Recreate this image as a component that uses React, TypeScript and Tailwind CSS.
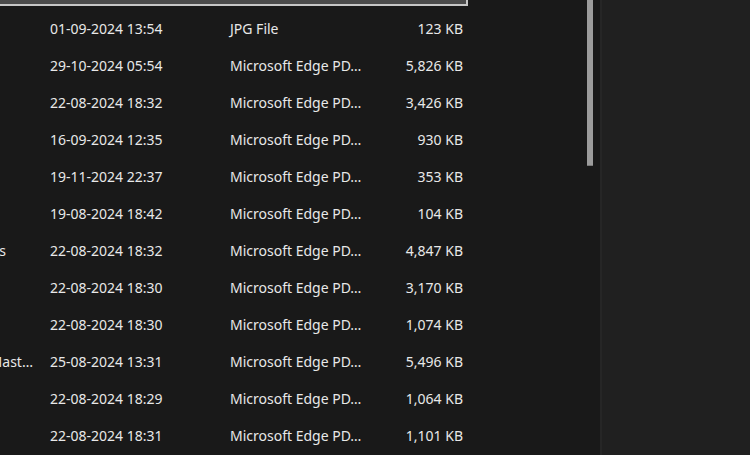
const rows = [
  { name: "", pad: "pr-[5px]", date: "01-09-2024 13:54", type: "JPG File", size: "123 KB" },
  { name: "", pad: "pr-[5px]", date: "29-10-2024 05:54", type: "Microsoft Edge PD…", size: "5,826 KB" },
  { name: "", pad: "pr-[5px]", date: "22-08-2024 18:32", type: "Microsoft Edge PD…", size: "3,426 KB" },
  { name: "", pad: "pr-[5px]", date: "16-09-2024 12:35", type: "Microsoft Edge PD…", size: "930 KB" },
  { name: "", pad: "pr-[5px]", date: "19-11-2024 22:37", type: "Microsoft Edge PD…", size: "353 KB" },
  { name: "", pad: "pr-[5px]", date: "19-08-2024 18:42", type: "Microsoft Edge PD…", size: "104 KB" },
  { name: "Lecture Notes", pad: "pr-[32px]", date: "22-08-2024 18:32", type: "Microsoft Edge PD…", size: "4,847 KB" },
  { name: "", pad: "pr-[5px]", date: "22-08-2024 18:30", type: "Microsoft Edge PD…", size: "3,170 KB" },
  { name: "", pad: "pr-[5px]", date: "22-08-2024 18:30", type: "Microsoft Edge PD…", size: "1,074 KB" },
  { name: "Digital Mast…", pad: "pr-[5px]", date: "25-08-2024 13:31", type: "Microsoft Edge PD…", size: "5,496 KB" },
  { name: "", pad: "pr-[5px]", date: "22-08-2024 18:29", type: "Microsoft Edge PD…", size: "1,064 KB" },
  { name: "", pad: "pr-[5px]", date: "22-08-2024 18:31", type: "Microsoft Edge PD…", size: "1,101 KB" },
];

export default function App() {
  return (
    <div
      className="flex h-[455px] w-[750px] overflow-hidden bg-[#191919] text-[14px] text-[#e8e8e8]"
      style={{ fontFamily: '"Noto Sans", "Open Sans", sans-serif' }}
    >
      {/* file list */}
      <div className="w-[580px] overflow-hidden">
        <div className="h-[6px] w-[468px] border-r-2 border-b-2 border-[#c6c6c6] bg-[#4b4b4b]" />
        {rows.map((r, i) => (
          <div key={i} className="flex h-[37px] items-center pt-[7px] whitespace-nowrap">
            <div className={`flex w-[38px] justify-end overflow-hidden ${r.pad}`}>
              <span>{r.name}</span>
            </div>
            <div className="ml-[12px] w-[180px]">{r.date}</div>
            <div className="w-[140px]">{r.type}</div>
            <div className="w-[93px] text-right">{r.size}</div>
          </div>
        ))}
      </div>

      {/* scrollbar */}
      <div className="w-[20px] pl-[7px]">
        <div className="h-[166px] w-[6px] border-b border-[#7a7a7a] bg-[#9c9c9c]" />
      </div>

      <div className="w-[2px] bg-[#262626]" />

      {/* preview pane */}
      <div className="flex-1 bg-[#202020]" />
    </div>
  );
}
